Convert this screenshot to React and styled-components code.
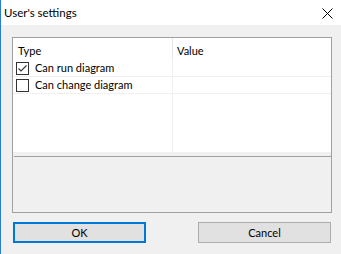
import React from "react";
import styled, { createGlobalStyle } from "styled-components";

const Global = createGlobalStyle`
  html, body { margin: 0; padding: 0; background: #f0f0f0; }
  body { font-family: "Segoe UI", Lato, "Liberation Sans", sans-serif; font-size: 11px; color: #000; }
`;

const Window = styled.div`
  width: 341px;
  height: 254px;
  box-sizing: border-box;
  border-left: 1px solid #2b7bd0;
  background: #f0f0f0;
  display: flex;
  flex-direction: column;
  overflow: hidden;
`;

const TitleBar = styled.div`
  height: 25px;
  flex: none;
  background: #fff;
  display: flex;
  align-items: center;
  justify-content: space-between;
  padding: 0 8px 0 3px;
`;

const Title = styled.span`
  font-size: 11.5px;
  line-height: 16px;
  margin-top: 1px;
`;

const CloseBtn = styled.span`
  width: 11px;
  height: 11px;
  display: flex;
  margin-top: 1px;
`;

const Body = styled.div`
  flex: 1;
  padding: 12px 0 0 11px;
  display: flex;
  flex-direction: column;
`;

const Panel = styled.div`
  width: 320px;
  height: 176px;
  box-sizing: border-box;
  border: 1px solid #a0a0a0;
  display: flex;
  flex-direction: column;
`;

const List = styled.div`
  height: 114px;
  background: #fff;
  position: relative;
  flex: none;
`;

const ColDivider = styled.div`
  position: absolute;
  left: 159px;
  top: 0;
  bottom: 0;
  width: 1px;
  background: #f0f0f0;
`;

const HeaderRow = styled.div`
  display: grid;
  grid-template-columns: 160px 1fr;
  height: 22px;
`;

const HeaderCell = styled.div`
  padding-left: ${(p) => p.$pad}px;
  line-height: 16px;
  padding-top: 5px;
  border-right: ${(p) => (p.$divider ? "1px solid #e5e5e5" : "none")};
  position: relative;
  z-index: 1;
`;

const Row = styled.div`
  display: grid;
  grid-template-columns: 160px 1fr;
  height: 16px;
  border-bottom: 1px solid #f0f0f0;
`;

const Cell = styled.div`
  display: flex;
  align-items: center;
  gap: 6px;
  padding-left: 3px;
  line-height: 16px;
`;

const Box = styled.span`
  width: 13px;
  height: 13px;
  box-sizing: border-box;
  border: 1px solid #333;
  background: #fff;
  display: flex;
  align-items: center;
  justify-content: center;
  flex: none;
`;

const Strip = styled.div`
  height: 4px;
  flex: none;
  margin-left: 1px;
  border-bottom: 1px solid #a0a0a0;
`;

const Buttons = styled.div`
  display: flex;
  justify-content: space-between;
  width: 318px;
  margin: 9px 0 0 1px;
`;

const Button = styled.button`
  width: 133px;
  height: 21px;
  box-sizing: border-box;
  background: #e1e1e1;
  border: ${(p) => (p.$primary ? "2px solid #0078d7" : "1px solid #adadad")};
  font: inherit;
  font-size: 11px;
  color: #000;
  padding: 0;
  display: flex;
  align-items: center;
  justify-content: center;
`;

function Check() {
  return (
    <svg width="11" height="11" viewBox="0 0 11 11">
      <path d="M1.5 5.5 L4 8 L9.5 2.5" fill="none" stroke="#333" strokeWidth="1.1" />
    </svg>
  );
}

export default function App() {
  const rows = [
    { label: "Can run diagram", checked: true },
    { label: "Can change diagram", checked: false },
  ];
  return (
    <>
      <Global />
      <Window>
        <TitleBar>
          <Title>User's settings</Title>
          <CloseBtn>
            <svg width="11" height="11" viewBox="0 0 11 11">
              <path d="M0.5 0.5 L10.5 10.5 M10.5 0.5 L0.5 10.5" stroke="#000" strokeWidth="1" />
            </svg>
          </CloseBtn>
        </TitleBar>
        <Body>
          <Panel>
            <List>
              <ColDivider />
              <HeaderRow>
                <HeaderCell $pad={5} $divider>Type</HeaderCell>
                <HeaderCell $pad={4}>Value</HeaderCell>
              </HeaderRow>
              {rows.map((r) => (
                <Row key={r.label}>
                  <Cell>
                    <Box>{r.checked && <Check />}</Box>
                    {r.label}
                  </Cell>
                  <Cell />
                </Row>
              ))}
            </List>
            <Strip />
          </Panel>
          <Buttons>
            <Button $primary>OK</Button>
            <Button>Cancel</Button>
          </Buttons>
        </Body>
      </Window>
    </>
  );
}
